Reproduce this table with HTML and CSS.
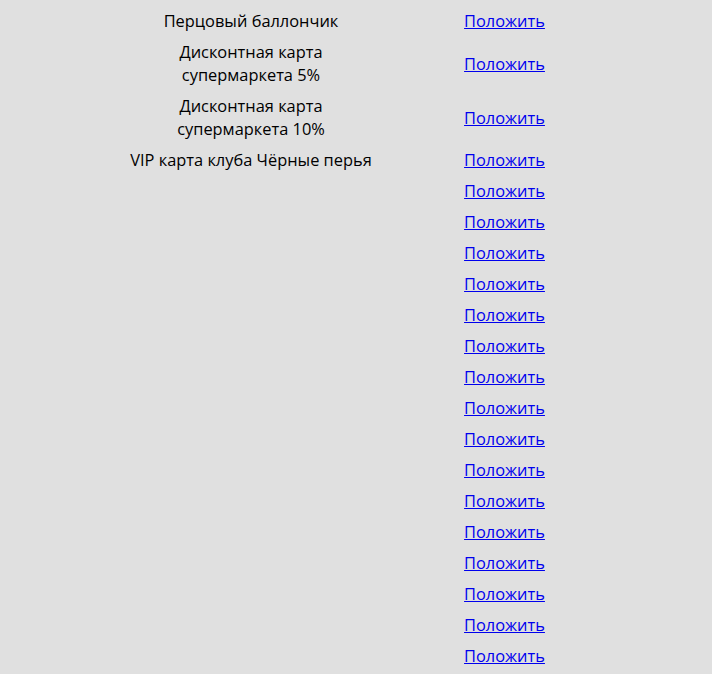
FILE: index.html
```html
<!DOCTYPE html>
<html lang="ru">
<head>
    <meta charset="UTF-8">
    <title>Инвентарь</title>
    <link rel="stylesheet" href="styles.css">
</head>
<body>
    <table class="items">
        <tr><td class="item-name">Перцовый баллончик</td><td class="item-action"><a href="#">Положить</a></td></tr>
        <tr><td class="item-name">Дисконтная карта супермаркета 5%</td><td class="item-action"><a href="#">Положить</a></td></tr>
        <tr><td class="item-name">Дисконтная карта супермаркета 10%</td><td class="item-action"><a href="#">Положить</a></td></tr>
        <tr><td class="item-name">VIP карта клуба Чёрные перья</td><td class="item-action"><a href="#">Положить</a></td></tr>
        <tr><td class="item-name"></td><td class="item-action"><a href="#">Положить</a></td></tr>
        <tr><td class="item-name"></td><td class="item-action"><a href="#">Положить</a></td></tr>
        <tr><td class="item-name"></td><td class="item-action"><a href="#">Положить</a></td></tr>
        <tr><td class="item-name"></td><td class="item-action"><a href="#">Положить</a></td></tr>
        <tr><td class="item-name"></td><td class="item-action"><a href="#">Положить</a></td></tr>
        <tr><td class="item-name"></td><td class="item-action"><a href="#">Положить</a></td></tr>
        <tr><td class="item-name"></td><td class="item-action"><a href="#">Положить</a></td></tr>
        <tr><td class="item-name"></td><td class="item-action"><a href="#">Положить</a></td></tr>
        <tr><td class="item-name"></td><td class="item-action"><a href="#">Положить</a></td></tr>
        <tr><td class="item-name"></td><td class="item-action"><a href="#">Положить</a></td></tr>
        <tr><td class="item-name"></td><td class="item-action"><a href="#">Положить</a></td></tr>
        <tr><td class="item-name"></td><td class="item-action"><a href="#">Положить</a></td></tr>
        <tr><td class="item-name"></td><td class="item-action"><a href="#">Положить</a></td></tr>
        <tr><td class="item-name"></td><td class="item-action"><a href="#">Положить</a></td></tr>
        <tr><td class="item-name"></td><td class="item-action"><a href="#">Положить</a></td></tr>
        <tr><td class="item-name"></td><td class="item-action"><a href="#">Положить</a></td></tr>
    </table>
</body>
</html>
```

FILE: styles.css
```css
body {
    font-family: "Open Sans", "Noto Sans", sans-serif;
    font-size: 16.4px;
    margin: 0;
    padding: 5px 0 0 0;
    background-color: #e0e0e0;
    color: #000;
}

.items {
    margin-left: 126px;
    border-collapse: collapse;
    table-layout: fixed;
}

.items td {
    padding: 4px 2px;
    line-height: 23px;
    text-align: center;
    vertical-align: middle;
}

.item-name {
    width: 246px;
}

.item-action {
    width: 253px;
}

.item-action a {
    color: #0000ee;
}
```
